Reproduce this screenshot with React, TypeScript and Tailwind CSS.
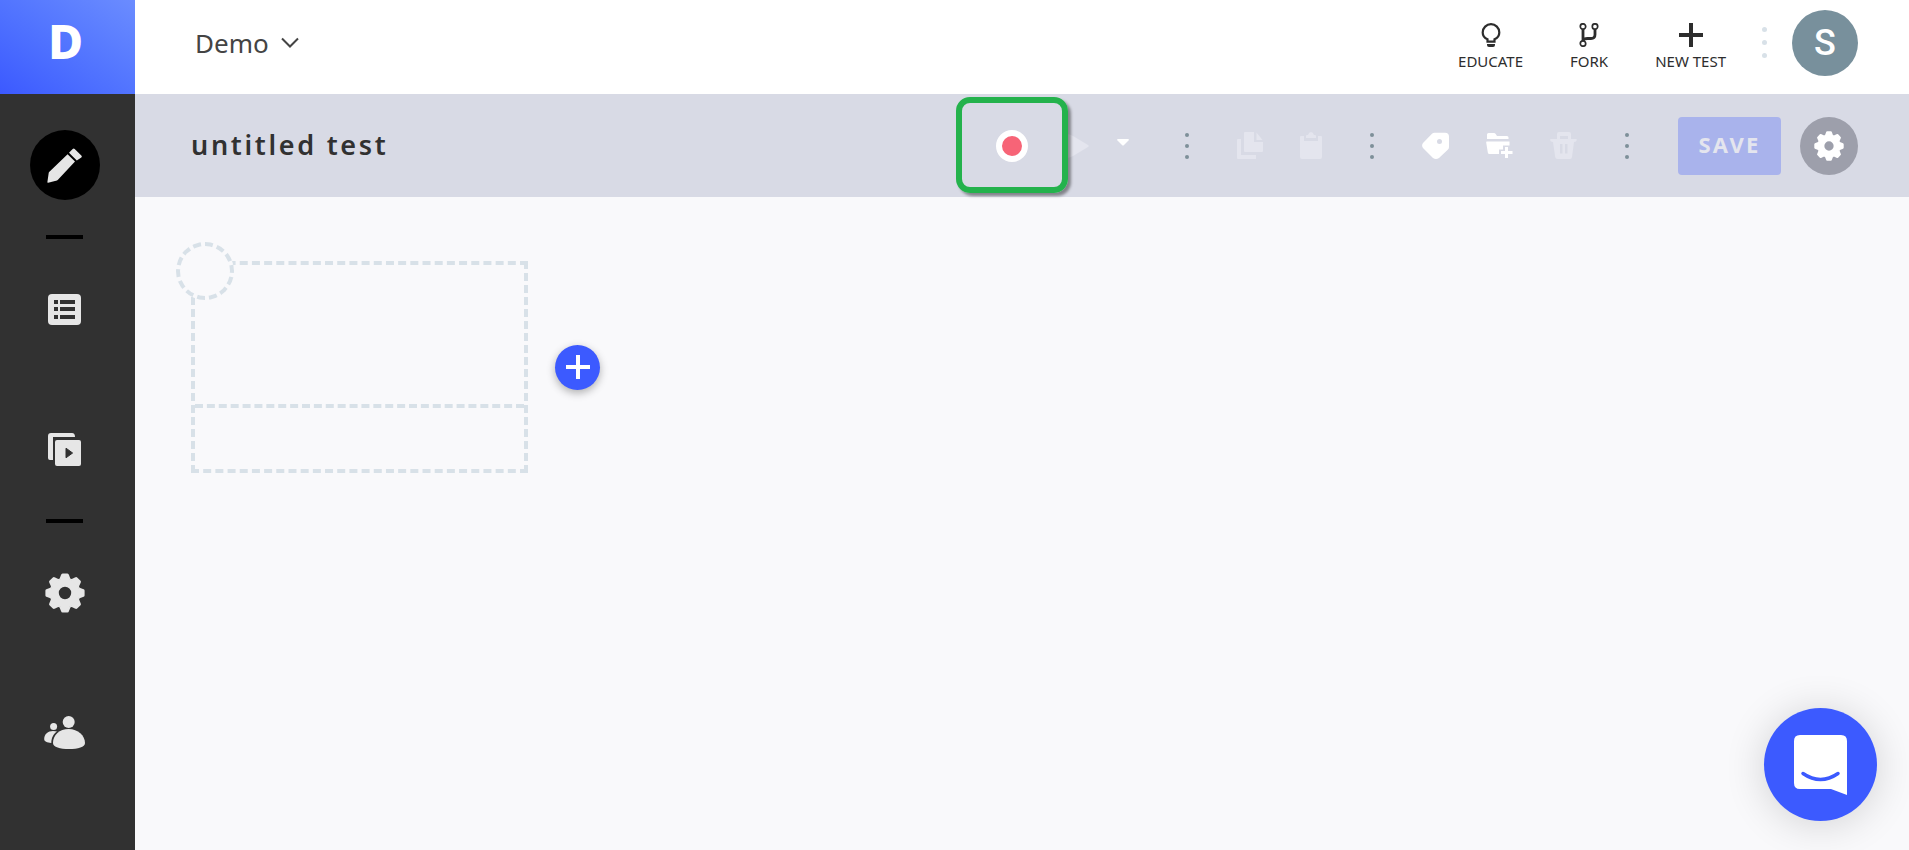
import type { ReactNode } from "react";

function GearIcon({ className }: { className?: string }) {
  return (
    <svg viewBox="-20 -20 40 40" className={className} aria-hidden="true">
      <circle r="10.4" fill="none" stroke="currentColor" strokeWidth="8.4" />
      {[0, 45, 90, 135, 180, 225, 270, 315].map((angle) => (
        <path
          key={angle}
          d="M-6.4 -13.2Q-4.8 -15 -4 -18Q-3.6 -19.6 -2.4 -19.6H2.4Q3.6 -19.6 4 -18Q4.8 -15 6.4 -13.2Z"
          fill="currentColor"
          transform={`rotate(${angle})`}
        />
      ))}
    </svg>
  );
}

function PencilIcon() {
  return (
    <svg viewBox="0 0 35 35" className="size-[35px]" fill="currentColor" aria-hidden="true">
      <path d="M.4 34.1 1.7 25Q1.8 24.3 2.4 23.7L20.6 6.2 28 13.5 11.2 31.5Q10.7 32.1 10 32.4L1 34.8Q.3 35 .4 34.1Z" />
      <path d="M22 4.8 25.7 1Q26.7 0 27.7 1L34.3 7.5Q35.3 8.5 34.3 9.5L29.8 12.6Z" />
    </svg>
  );
}

function ListIcon() {
  return (
    <svg viewBox="0 0 33 31" className="h-[31px] w-[33px]" aria-hidden="true">
      <rect width="33" height="31" rx="4" fill="currentColor" />
      <g fill="#313131">
        {[6, 13, 21].map((y) => (
          <g key={y}>
            <rect x="6" y={y} width="4" height="4" />
            <rect x="12" y={y} width="15" height="4" />
          </g>
        ))}
      </g>
    </svg>
  );
}

function PlaylistIcon() {
  return (
    <svg viewBox="0 0 33 33" className="size-[33px]" fill="currentColor" aria-hidden="true">
      <path d="M0 25V3Q0 0 3 0H24Q27 0 27 4H5V27H2Q0 27 0 25Z" />
      <rect x="7" y="7" width="26" height="26" rx="2" />
      <path d="M18 15.2 24.6 20 18 24.8Z" fill="#313131" stroke="#313131" strokeLinejoin="round" />
    </svg>
  );
}

function PeopleIcon() {
  return (
    <svg viewBox="0 0 41 34" className="h-[34px] w-[41px]" fill="currentColor" aria-hidden="true">
      <circle cx="24.7" cy="6" r="6" />
      <path d="M9 27C9 19 15.5 13 24.7 13S41 19.5 41 27C41 31 34 33 25 33S9 31 9 27Z" />
      <circle cx="9.6" cy="10.4" r="3.5" />
      <path d="M.2 23C.2 18 4 15 9 15 10.5 15 12 15.2 13 15.6 9 18.5 7.5 22 7.3 27 3 26.7.2 25.5.2 23Z" />
    </svg>
  );
}

function BulbIcon() {
  return (
    <svg viewBox="0 0 20 24" className="h-6 w-5" aria-hidden="true">
      <path
        d="M6.5 18.6V16.3C3.5 15 1.7 12.5 1.7 9.5A8.3 8.3 0 0 1 18.3 9.5C18.3 12.5 16.5 15 13.5 16.3V18.6Z"
        fill="none"
        stroke="currentColor"
        strokeWidth="2.2"
      />
      <path d="M6 21H14V22Q14 24 12 24H8Q6 24 6 22Z" fill="currentColor" />
    </svg>
  );
}

function ForkIcon() {
  return (
    <svg viewBox="0 0 20 24" className="h-6 w-5" fill="none" stroke="currentColor" aria-hidden="true">
      <g strokeWidth="1.7">
        <circle cx="4" cy="3.5" r="2.7" />
        <circle cx="16" cy="3.5" r="2.7" />
        <circle cx="4" cy="20.5" r="2.7" />
      </g>
      <path d="M4 6V18M16 6V11.5Q16 15.5 12 15.5H8.5Q5 15.5 4 17.5" strokeWidth="2.8" />
    </svg>
  );
}

function PlusIcon() {
  return (
    <svg viewBox="0 0 24 24" className="size-6" fill="none" stroke="currentColor" strokeWidth="4" aria-hidden="true">
      <path d="M12 0V24M0 12H24" />
    </svg>
  );
}

function CopyIcon() {
  return (
    <svg viewBox="0 0 26 27" className="h-[27px] w-[26px]" fill="currentColor" aria-hidden="true">
      <path d="M0 8Q0 7 1 7H4V23H19V27H1Q0 27 0 26Z" />
      <path d="M8 0H17V10H26V19Q26 20 25 20H8Q7 20 7 19V1Q7 0 8 0Z" />
      <path d="M19.5.5 25.5 8H19.5Z" />
    </svg>
  );
}

function ClipboardIcon() {
  return (
    <svg viewBox="0 0 24 27" className="h-[27px] w-6" fill="currentColor" aria-hidden="true">
      <path d="M2 4H5V9H19V4H22Q23 4 23 5V25Q23 27 21 27H3Q1 27 1 25V5Q1 4 2 4Z" />
      <path d="M7 6V4Q7 3 8 3H9Q10 0 12 0T15 3H16Q17 3 17 4V6Z" />
    </svg>
  );
}

function TagIcon() {
  return (
    <svg viewBox="0 0 27 27" className="size-[27px]" fill="currentColor" aria-hidden="true">
      <path
        fillRule="evenodd"
        d="M10 1.8Q11 .8 12.5.8H23Q27 .8 27 4.8V15Q27 16.5 26 17.5L17 26Q14 28 11 26L1 16Q-.8 13.5 1 11ZM17.5 7A2.5 2.5 0 0 0 17.5 12 2.5 2.5 0 0 0 17.5 7Z"
      />
    </svg>
  );
}

function FolderPlusIcon() {
  return (
    <svg viewBox="0 0 27 27" className="size-[27px]" fill="currentColor" aria-hidden="true">
      <path d="M1 7V2.5Q1 1 2.5 1H8Q9 1 9.7 2L11 4H21Q22.5 4 22.5 5.5V7Z" />
      <path d="M.8 9.5H23.5V13.5H17V17.5H13V22H3.5Q2 22 1.8 20.5L.2 10.5Q0 9.5.8 9.5Z" />
      <path d="M19 15H22V19H26.5V22H22V26H19V22H15V19H19Z" />
    </svg>
  );
}

function TrashIcon() {
  return (
    <svg viewBox="0 0 27 27" className="size-[27px]" fill="currentColor" aria-hidden="true">
      <path
        fillRule="evenodd"
        d="M7 7V2Q7 0 9 0H19Q21 0 21 2V7H26Q27 7 26.8 8 26.5 10 24 10L22 25Q21.7 27 20 27H7.5Q5.5 27 5.2 25L3 10Q.5 10 0 8 0 7 1 7ZM10 4V7H18V4ZM10 12V21.5H12.5V12ZM15 12V21.5H17.5V12Z"
      />
    </svg>
  );
}

function Dots({ className }: { className: string }) {
  return (
    <span className={`flex flex-col items-center ${className}`} aria-hidden="true">
      <i className="aspect-square w-full rounded-full bg-current" />
      <i className="aspect-square w-full rounded-full bg-current" />
      <i className="aspect-square w-full rounded-full bg-current" />
    </span>
  );
}

function NavItem({ label, active, children }: { label: string; active?: boolean; children: ReactNode }) {
  return (
    <a
      href="#"
      aria-label={label}
      className={`flex size-[70px] items-center justify-center rounded-full ${active ? "bg-black" : ""}`}
    >
      {children}
    </a>
  );
}

function HeaderAction({ label, children }: { label: string; children: ReactNode }) {
  return (
    <button className="flex flex-col items-center gap-1 text-[15px] leading-5 text-[#2d2d2d]">
      {children}
      {label}
    </button>
  );
}

function Sidebar() {
  return (
    <aside className="flex w-[135px] shrink-0 flex-col bg-[#313131]">
      <a
        href="#"
        className="flex h-[94px] items-center justify-center bg-linear-to-tr from-[#3c59ff] to-[#6b8cff] pr-1 pb-3 text-5xl font-extrabold text-white"
      >
        D
      </a>
      <nav className="flex flex-col items-center gap-[35px] py-9 pr-[6px] text-[#e6e6e6]">
        <NavItem label="Editor" active>
          <PencilIcon />
        </NavItem>
        <hr className="h-1 w-[37px] border-0 bg-black" />
        <div className="flex flex-col gap-[70px]">
          <NavItem label="Tests">
            <ListIcon />
          </NavItem>
          <NavItem label="Suites">
            <PlaylistIcon />
          </NavItem>
        </div>
        <hr className="h-1 w-[37px] border-0 bg-black" />
        <div className="flex flex-col gap-[70px]">
          <NavItem label="Settings">
            <GearIcon className="size-10" />
          </NavItem>
          <NavItem label="Team">
            <PeopleIcon />
          </NavItem>
        </div>
      </nav>
    </aside>
  );
}

function Header() {
  return (
    <header className="flex h-[94px] items-center justify-between bg-white pr-[51px] pb-[9px] pl-[60px]">
      <button className="flex items-center gap-3 text-[26px] leading-8 text-[#444]">
        Demo
        <svg viewBox="0 0 18 11" className="h-[11px] w-[18px]" fill="none" stroke="currentColor" strokeWidth="2" aria-hidden="true">
          <path d="M1 1.5 9 9.5 17 1.5" />
        </svg>
      </button>
      <div className="flex items-center">
        <div className="flex gap-[47px] pt-2">
          <HeaderAction label="EDUCATE">
            <BulbIcon />
          </HeaderAction>
          <HeaderAction label="FORK">
            <ForkIcon />
          </HeaderAction>
          <HeaderAction label="NEW TEST">
            <PlusIcon />
          </HeaderAction>
        </div>
        <Dots className="mr-[25px] ml-9 w-[5px] gap-2 text-[#d8e1e8]" />
        <button className="size-[66px] rounded-full bg-[#78909c] font-[Roboto] text-4xl font-medium text-white">
          S
        </button>
      </div>
    </header>
  );
}

function Toolbar() {
  return (
    <div className="flex h-[103px] items-center justify-between bg-[#d8dae5] pr-[51px] pl-14">
      <h1 className="pb-0.5 text-[27px] leading-9 font-semibold tracking-widest text-[#313131]">untitled test</h1>
      <div className="flex items-center text-white">
        <div className="flex items-center">
          <div className="relative mr-[37px]">
            <button
              aria-label="Record"
              className="block size-8 rounded-full border-[6px] border-white bg-[#f76477]"
            />
            <span className="pointer-events-none absolute -inset-x-10 -top-[33px] -bottom-[31px] rounded-[14px] border-[6px] border-[#24b24c] shadow-[3px_3px_3px_rgba(0,0,0,0.4)]" />
          </div>
          <button aria-label="Run" disabled className="text-[#e4e5ee]">
            <svg viewBox="0 0 24 24" className="size-6" fill="currentColor" aria-hidden="true">
              <path d="M2 0Q4 0 8 2L23 11Q24.5 12 23 13L8 22Q4 24 2 24Z" />
            </svg>
          </button>
          <button aria-label="Run options" className="mr-14 ml-7 pb-1.5">
            <svg viewBox="0 0 12 7" className="h-[7px] w-3" fill="currentColor" aria-hidden="true">
              <path d="M1 0H11Q12.5.5 11.5 1.5L7 6Q6 7 5 6L.5 1.5Q-.5.5 1 0Z" />
            </svg>
          </button>
        </div>
        <Dots className="w-1 gap-[7px] text-[#7e8f99]" />
        <div className="mr-[47px] ml-12 flex items-center gap-9 text-[#e4e5ee]">
          <button aria-label="Copy" disabled>
            <CopyIcon />
          </button>
          <button aria-label="Paste" disabled>
            <ClipboardIcon />
          </button>
        </div>
        <Dots className="w-1 gap-[7px] text-[#7e8f99]" />
        <div className="mx-12 flex items-center gap-[37px]">
          <button aria-label="Tag">
            <TagIcon />
          </button>
          <button aria-label="Add to folder">
            <FolderPlusIcon />
          </button>
          <button aria-label="Delete" disabled className="text-[#e4e5ee]">
            <TrashIcon />
          </button>
        </div>
        <Dots className="w-1 gap-[7px] text-[#7e8f99]" />
        <button
          disabled
          className="mr-[19px] ml-[49px] h-[58px] w-[103px] rounded bg-[#a9b3ec] pb-0.5 text-[22px] font-bold tracking-widest text-[#e4e5ee]"
        >
          SAVE
        </button>
        <button
          aria-label="Test settings"
          className="flex size-[58px] items-center justify-center rounded-full bg-[#9d9fab]"
        >
          <GearIcon className="size-[30px]" />
        </button>
      </div>
    </div>
  );
}

export default function App() {
  return (
    <div className="flex min-h-screen bg-[#f9f9fb] font-['Noto_Sans',sans-serif]">
      <Sidebar />
      <div className="flex min-w-0 flex-1 flex-col">
        <Header />
        <Toolbar />
        <main className="flex flex-1 items-start px-14 py-16">
          <div className="flex items-center gap-[27px]">
            <div className="relative h-[212px] w-[337px] border-4 border-dashed border-[#d8e1e8]">
              <div className="h-[143px] border-b-4 border-dashed border-[#d8e1e8]" />
              <span className="absolute -top-[23px] -left-[19px] size-[58px] rounded-full border-4 border-dashed border-[#d8e1e8] bg-[#f9f9fb]" />
            </div>
            <button
              aria-label="Add step"
              className="flex size-[45px] items-center justify-center rounded-full bg-[#3c5aff] text-white shadow-[0_3px_8px_rgba(0,0,0,0.3)]"
            >
              <PlusIcon />
            </button>
          </div>
        </main>
      </div>
      <button
        aria-label="Open chat"
        className="fixed right-8 bottom-[29px] flex size-[113px] items-center justify-center rounded-full bg-[#3c5aff] shadow-[0_3px_40px_rgba(0,0,0,0.16)]"
      >
        <svg viewBox="0 0 53 60" className="h-[60px] w-[53px]" aria-hidden="true">
          <path d="M6 0H47Q53 0 53 6V60L37 54H6Q0 54 0 48V6Q0 0 6 0Z" fill="#fff" />
          <path d="M9 38.5Q26.5 50.5 44 38.5" fill="none" stroke="#3c5aff" strokeWidth="3.5" strokeLinecap="round" />
        </svg>
      </button>
    </div>
  );
}
